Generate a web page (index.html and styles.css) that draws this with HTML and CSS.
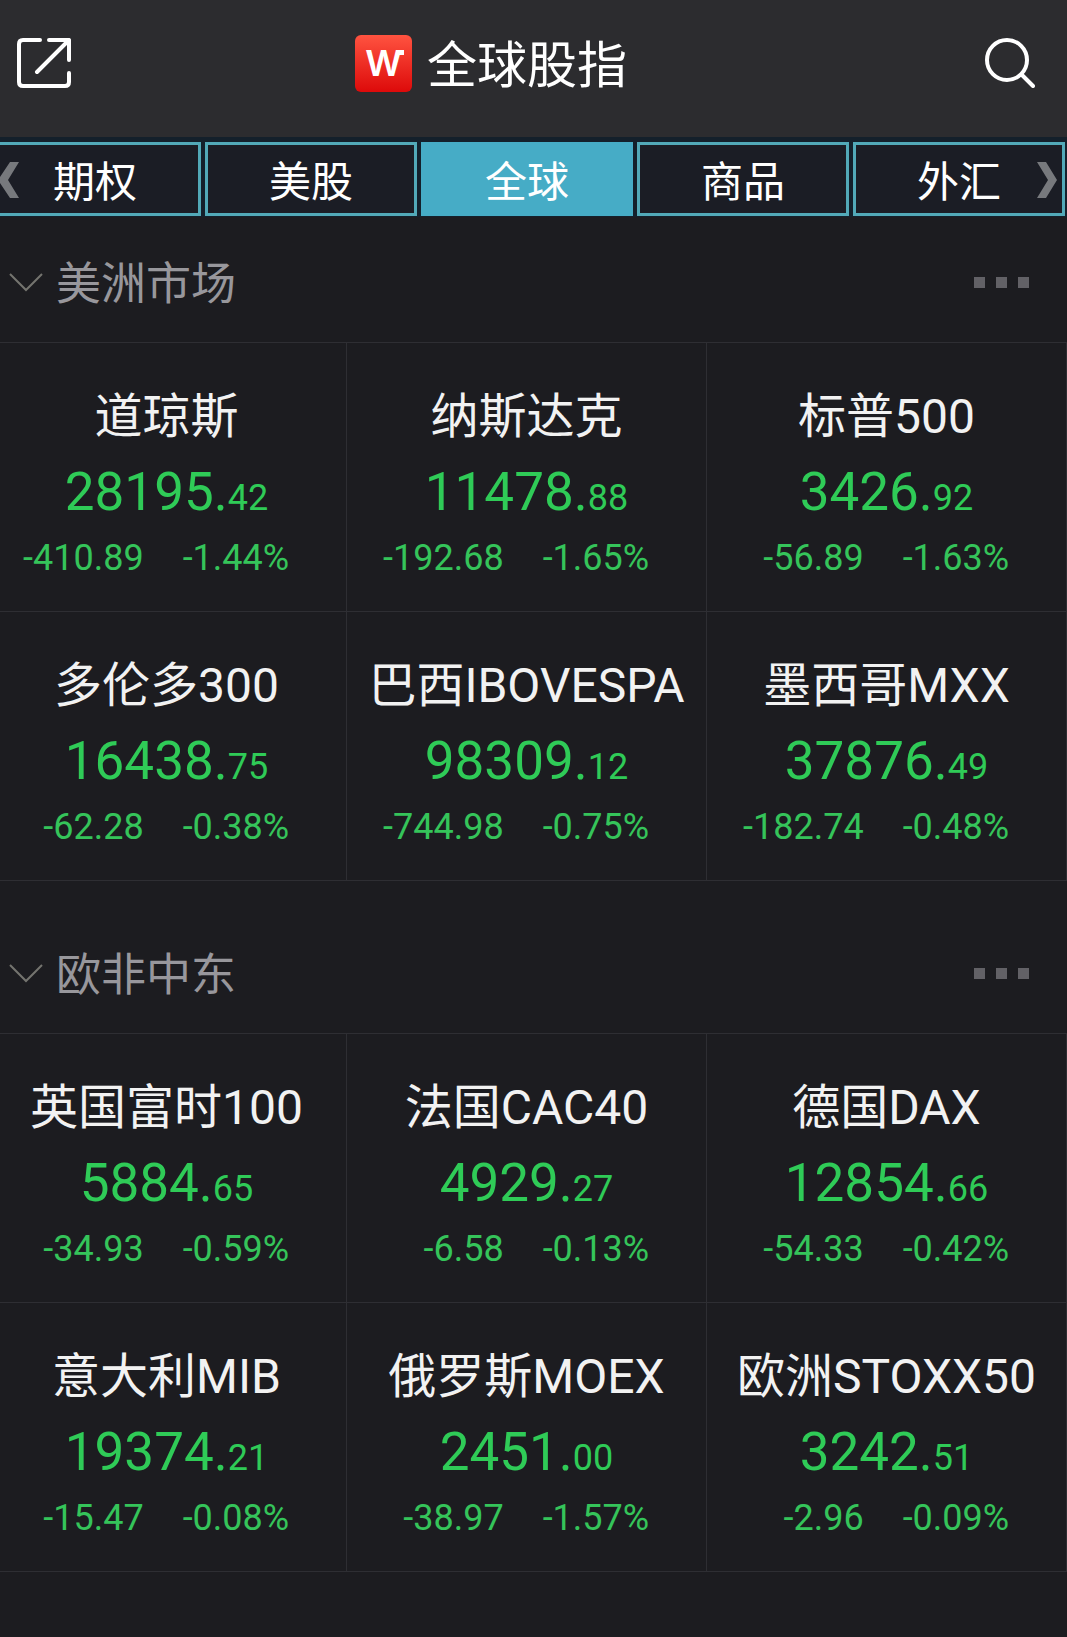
FILE: index.html
```html
<!DOCTYPE html>
<html lang="zh-CN">
<head>
  <meta charset="UTF-8">
  <title>全球股指</title>
  <meta name="viewport" content="width=device-width, initial-scale=1.0">
  <link rel="stylesheet" href="styles.css">
</head>

<body>

  <header class="topbar">
    <button class="icon-btn" aria-label="分享">
      <svg width="54" height="50" viewBox="0 0 54 50" fill="none" stroke="#fff" stroke-width="4" stroke-linecap="round" stroke-linejoin="round">
        <path d="M23 2H6Q2 2 2 6V44Q2 48 6 48H48Q52 48 52 44V35"/>
        <path d="M32 2H52V22M52 2L20 34"/>
      </svg>
    </button>
    <div class="brand">
      <span class="logo">W</span>
      <h1>全球股指</h1>
    </div>
    <button class="icon-btn" aria-label="搜索">
      <svg width="50" height="50" viewBox="0 0 50 50" fill="none" stroke="#fff" stroke-width="4" stroke-linecap="round">
        <circle cx="22" cy="22" r="20"/>
        <path d="M37 37L48 48"/>
      </svg>
    </button>
  </header>

  <!-- 分类标签 -->
  <nav class="tabs">
    <div class="tab-list">
      <a class="tab" href="#">期权</a>
      <a class="tab" href="#">美股</a>
      <a class="tab active" href="#">全球</a>
      <a class="tab" href="#">商品</a>
      <a class="tab" href="#">外汇</a>
    </div>
    <svg class="arrow arrow-left" width="20" height="36" viewBox="0 0 20 36" fill="#77797d"><path d="M10 0H19L8 18L19 36H10L-2 18Z"/></svg>
    <svg class="arrow arrow-right" width="20" height="36" viewBox="0 0 20 36" fill="#77797d"><path d="M0 0H9L20 18L9 36H0L11 18Z"/></svg>
  </nav>

  <main>
    <section class="market">
      <div class="market-head">
        <button class="toggle">
          <svg width="34" height="20" viewBox="0 0 34 20" fill="none" stroke="#74746f" stroke-width="2"><path d="M1 2L17 18L33 2"/></svg>
          <span>美洲市场</span>
        </button>
        <button class="more" aria-label="更多"><i></i><i></i><i></i></button>
      </div>
      <div class="grid">
        <div class="card">
          <div class="name">道琼斯</div>
          <div class="price">28195.<small>42</small></div>
          <div class="change"><span>-410.89</span><span>-1.44%</span></div>
        </div>
        <div class="card">
          <div class="name">纳斯达克</div>
          <div class="price">11478.<small>88</small></div>
          <div class="change"><span>-192.68</span><span>-1.65%</span></div>
        </div>
        <div class="card">
          <div class="name">标普500</div>
          <div class="price">3426.<small>92</small></div>
          <div class="change"><span>-56.89</span><span>-1.63%</span></div>
        </div>
        <div class="card">
          <div class="name">多伦多300</div>
          <div class="price">16438.<small>75</small></div>
          <div class="change"><span>-62.28</span><span>-0.38%</span></div>
        </div>
        <div class="card">
          <div class="name">巴西IBOVESPA</div>
          <div class="price">98309.<small>12</small></div>
          <div class="change"><span>-744.98</span><span>-0.75%</span></div>
        </div>
        <div class="card">
          <div class="name">墨西哥MXX</div>
          <div class="price">37876.<small>49</small></div>
          <div class="change"><span>-182.74</span><span>-0.48%</span></div>
        </div>
      </div>
    </section>

    <section class="market">
      <div class="market-head">
        <button class="toggle">
          <svg width="34" height="20" viewBox="0 0 34 20" fill="none" stroke="#74746f" stroke-width="2"><path d="M1 2L17 18L33 2"/></svg>
          <span>欧非中东</span>
        </button>
        <button class="more" aria-label="更多"><i></i><i></i><i></i></button>
      </div>
      <div class="grid">
        <div class="card">
          <div class="name">英国富时100</div>
          <div class="price">5884.<small>65</small></div>
          <div class="change"><span>-34.93</span><span>-0.59%</span></div>
        </div>
        <div class="card">
          <div class="name">法国CAC40</div>
          <div class="price">4929.<small>27</small></div>
          <div class="change"><span>-6.58</span><span>-0.13%</span></div>
        </div>
        <div class="card">
          <div class="name">德国DAX</div>
          <div class="price">12854.<small>66</small></div>
          <div class="change"><span>-54.33</span><span>-0.42%</span></div>
        </div>
        <div class="card">
          <div class="name">意大利MIB</div>
          <div class="price">19374.<small>21</small></div>
          <div class="change"><span>-15.47</span><span>-0.08%</span></div>
        </div>
        <div class="card">
          <div class="name">俄罗斯MOEX</div>
          <div class="price">2451.<small>00</small></div>
          <div class="change"><span>-38.97</span><span>-1.57%</span></div>
        </div>
        <div class="card">
          <div class="name">欧洲STOXX50</div>
          <div class="price">3242.<small>51</small></div>
          <div class="change"><span>-2.96</span><span>-0.09%</span></div>
        </div>
      </div>
    </section>
  </main>

</body>
</html>
```
FILE: styles.css
```css
* {
  box-sizing: border-box;
}

body {
  margin: 0;
  min-height: 100vh;
  background: #1c1c20;
  color: #f2f2f2;
  font-family: Roboto, "Noto Sans CJK SC", sans-serif;
  overflow-x: hidden;
}

button {
  padding: 0;
  border: none;
  background: none;
  color: inherit;
  font: inherit;
  cursor: pointer;
}

svg {
  display: block;
}

.topbar {
  display: flex;
  align-items: center;
  justify-content: space-between;
  padding: 26px 32px 37px 17px;
  background: #2c2c2f;
}

.brand {
  display: flex;
  align-items: center;
  gap: 15px;
  padding-right: 74px;
}

.logo {
  position: relative;
  width: 57px;
  height: 57px;
  border-radius: 6px;
  background: linear-gradient(#ff5340, #dd0a0a);
  color: #fff;
  font: 600 36px/56px Inter, sans-serif;
  text-align: center;
}

/* little tail on the right arm of the W */
.logo::after {
  content: "";
  position: absolute;
  top: 15px;
  right: 8px;
  width: 7px;
  height: 5px;
  background: #fff;
}

h1 {
  margin: 0;
  padding-top: 6px;
  color: #fff;
  font-size: 50px;
  font-weight: 400;
  line-height: 68px;
}

.tabs {
  position: relative;
  padding: 5px 0 1px;
  background: #14202b;
  overflow: hidden;
}

/* strip is scrolled a little past its left edge */
.tab-list {
  display: flex;
  gap: 4px;
  margin-left: -13px;
  padding: 0 2px;
}

.tab {
  flex: 1;
  padding-top: 8px;
  border: 3px solid #52a9b8;
  background: #1b1d25;
  color: #fff;
  font-size: 42px;
  line-height: 60px;
  text-align: center;
  text-decoration: none;
}

.tab.active {
  border-color: #46acc6;
  background: #46acc6;
}

.arrow {
  position: absolute;
  top: 25px;
}

.arrow-left {
  left: 0;
}

.arrow-right {
  right: 10px;
}

.market {
  padding-top: 5px;
}

.market + .market {
  padding-top: 32px;
}

.market-head {
  display: flex;
  align-items: center;
  justify-content: space-between;
  height: 120px;
  padding: 0 38px 0 9px;
}

.toggle {
  display: flex;
  align-items: center;
  gap: 13px;
  color: #98979c;
  font-size: 45px;
  line-height: 60px;
}

.toggle span {
  padding-top: 6px;
}

.more {
  display: flex;
  gap: 11px;
}

.more i {
  width: 11px;
  height: 11px;
  background: #626166;
}

.grid {
  display: grid;
  grid-template-columns: repeat(3, 1fr);
  margin-left: -13px;
  border-top: 1px solid #2e2e33;
}

.card {
  padding: 42px 0 30px;
  border-right: 1px solid #2e2e33;
  border-bottom: 1px solid #2e2e33;
  text-align: center;
  white-space: nowrap;
}

.name {
  font-size: 48px;
  line-height: 64px;
}

.price {
  color: #2fcb57;
  font-size: 53px;
  line-height: 86px;
}

.price small {
  font-size: 36px;
  line-height: 48px;
}

.change {
  display: grid;
  grid-template-columns: 43% 1fr;
  gap: 39px;
  padding-left: 4px;
  color: #35c45a;
  font-size: 36px;
  line-height: 46px;
}

.change span:first-child {
  text-align: right;
}

.change span:last-child {
  text-align: left;
}
```
